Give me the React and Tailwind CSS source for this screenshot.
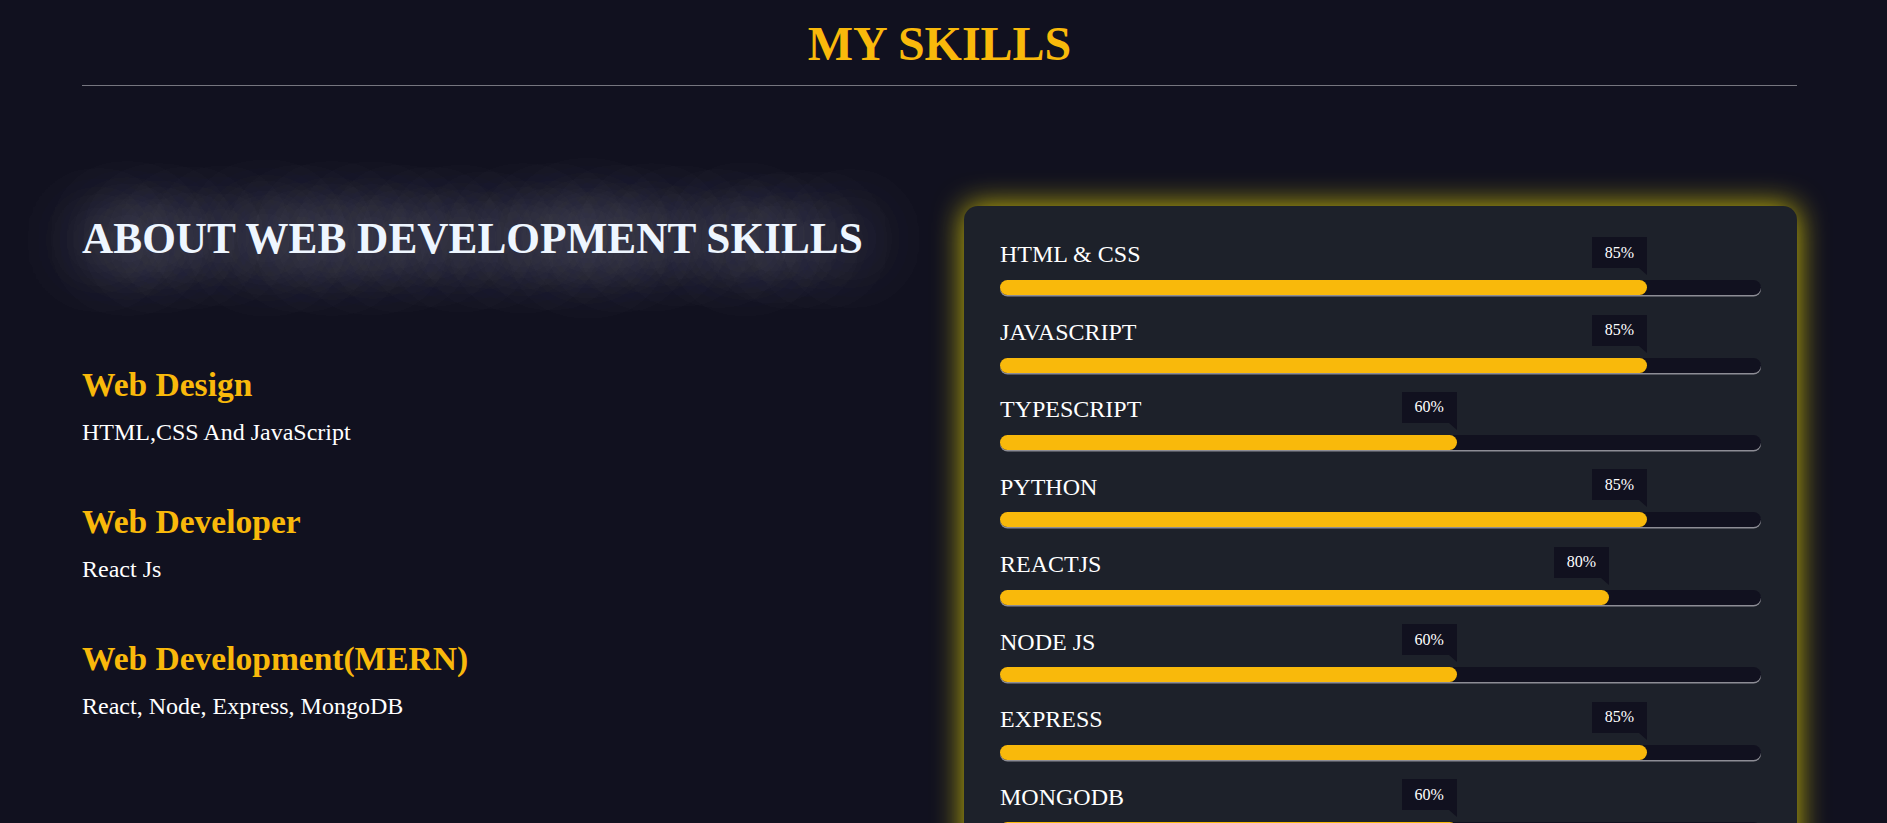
const SKILLS = [
  { name: 'HTML & CSS', pct: 85 },
  { name: 'JAVASCRIPT', pct: 85 },
  { name: 'TYPESCRIPT', pct: 60 },
  { name: 'PYTHON', pct: 85 },
  { name: 'REACTJS', pct: 80 },
  { name: 'NODE JS', pct: 60 },
  { name: 'EXPRESS', pct: 85 },
  { name: 'MONGODB', pct: 60 },
];

const ABOUT = [
  { title: 'Web Design', text: 'HTML,CSS And JavaScript' },
  { title: 'Web Developer', text: 'React Js' },
  { title: 'Web Development(MERN)', text: 'React, Node, Express, MongoDB' },
];

function SkillBar({ name, pct }) {
  return (
    <div>
      <p className="text-[24px] leading-[1.107] text-white">{name}</p>
      <div className="relative mt-[12.1px]">
        <div
          className="absolute bottom-[calc(100%+12px)] w-[55px] h-[31px] bg-[#11111f] flex items-center justify-center text-[16px] text-white"
          style={{ left: `calc(${pct}% - 55px)` }}
        >
          {pct}%
          <span className="absolute top-full right-0 w-0 h-0 border-t-[7px] border-l-[8px] border-t-[#11111f] border-l-transparent" />
        </div>
        <div className="h-[15px] rounded-full bg-[#11111f] shadow-[0_1.5px_0_#8d8d95]">
          <div className="h-full rounded-full bg-[#f9b90b]" style={{ width: `${pct}%` }} />
        </div>
      </div>
    </div>
  );
}

export default function App() {
  return (
    <div className="min-h-screen bg-[#11111f] font-['Liberation_Serif',serif] text-white">
      <div className="pl-[82px] pr-[90px] pb-10">
        <header className="pt-[17px]">
          <h1 className="text-center text-[48px] leading-[1.107] font-bold text-[#f9b90b]">MY SKILLS</h1>
          <hr className="mt-[15px] border-[#76767f]" />
        </header>

        <div className="mt-[120px] grid grid-cols-2 gap-[49px] items-start">
          <div>
            <h2 className="mt-[9px] text-[43.3px] leading-[1.107] font-bold text-[#eef6ff] [text-shadow:0_0_75px_rgba(225,225,255,0.8),0_0_75px_rgba(225,225,255,0.8)]">
              ABOUT WEB DEVELOPMENT SKILLS
            </h2>
            <div className="mt-[103px] flex flex-col gap-[57px]">
              {ABOUT.map((a) => (
                <div key={a.title}>
                  <h3 className="text-[33.5px] leading-[1.107] font-bold text-[#f9b90b]">{a.title}</h3>
                  <p className="mt-[16.2px] text-[24px] leading-[1.107] text-white">{a.text}</p>
                </div>
              ))}
            </div>
          </div>

          <div className="bg-[#1d212a] rounded-[14px] px-[36px] pt-[35.3px] pb-[40px] shadow-[0_0_30px_rgba(255,236,0,0.8)]">
            <div className="flex flex-col gap-[23.8px]">
              {SKILLS.map((s) => (
                <SkillBar key={s.name} name={s.name} pct={s.pct} />
              ))}
            </div>
          </div>
        </div>
      </div>
    </div>
  );
}
